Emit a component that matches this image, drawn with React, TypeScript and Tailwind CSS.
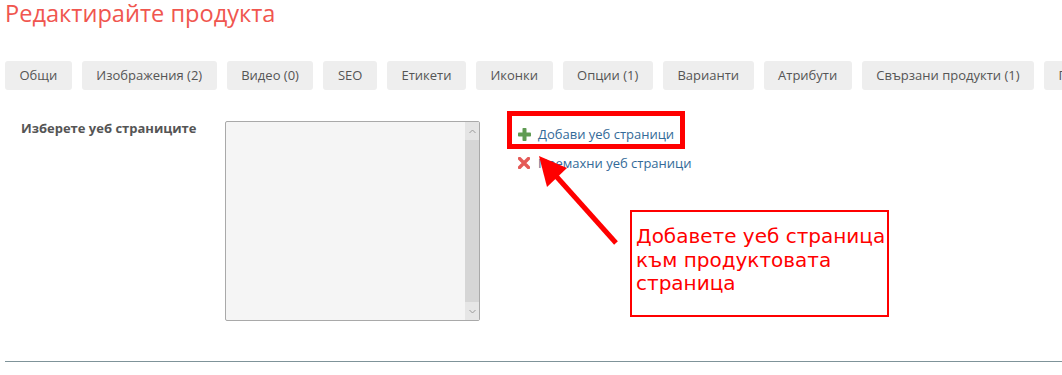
import React from 'react'

const tabs = [
  'Общи',
  'Изображения (2)',
  'Видео (0)',
  'SEO',
  'Етикети',
  'Иконки',
  'Опции (1)',
  'Варианти',
  'Атрибути',
  'Свързани продукти (1)',
  'Прикачени файлове',
]

function PlusIcon() {
  return (
    <svg width="13" height="13" viewBox="0 0 13 13" className="shrink-0">
      <rect x="4.5" y="0" width="4" height="13" rx="0.8" fill="#5f9b52" />
      <rect x="0" y="4.5" width="13" height="4" rx="0.8" fill="#5f9b52" />
    </svg>
  )
}

function TimesIcon() {
  return (
    <svg width="12" height="12" viewBox="0 0 12 12" className="shrink-0">
      <path d="M1.5 1.5 L10.5 10.5 M10.5 1.5 L1.5 10.5" stroke="#e45a57" strokeWidth="3.4" strokeLinecap="round" />
    </svg>
  )
}

function ListBox() {
  return (
    <div className="mt-[2px] flex h-[200px] w-[255px] rounded-[2px] border border-[#a9a9a9] bg-[#f5f5f5]">
      <div className="flex-1" />
      <div className="flex w-[14px] flex-col bg-[#d8d8d8]">
        <div className="flex h-[18px] items-center justify-center bg-[#e4e4e4]">
          <svg width="7" height="5" viewBox="0 0 7 5">
            <path d="M0.5 4 L3.5 1 L6.5 4" fill="none" stroke="#9a9a9a" strokeWidth="1" />
          </svg>
        </div>
        <div className="flex-1 bg-[#d6d6d6]" />
        <div className="flex h-[18px] items-center justify-center bg-[#e6e6e6]">
          <svg width="7" height="5" viewBox="0 0 7 5">
            <path d="M0.5 1 L3.5 4 L6.5 1" fill="none" stroke="#9a9a9a" strokeWidth="1" />
          </svg>
        </div>
      </div>
    </div>
  )
}

export default function App() {
  return (
    <div className="relative h-[375px] w-[1062px] overflow-hidden bg-white pl-[5px]" style={{ fontFamily: '"Open Sans", "Noto Sans", sans-serif' }}>
      <h1 className="text-[23.6px] font-normal leading-[26px] text-[#f0564f]">Редактирайте продукта</h1>

      <div className="mt-[35px] flex gap-[10px] overflow-hidden whitespace-nowrap">
        {tabs.map((t) => (
          <div key={t} className="shrink-0 rounded-[3px] bg-[#eeeeee] px-[14.5px] py-[5px] text-[13px] leading-[19px] text-[#555555]">
            {t}
          </div>
        ))}
      </div>

      <div className="mt-[29px] flex items-start">
        <div className="w-[220px] pl-4 text-[13px] font-bold leading-[18px] text-[#555555]">Изберете уеб страниците</div>
        <ListBox />
        <div className="ml-[38px] flex flex-col pt-[5px] text-[13px] leading-[20px] text-[#336a98]">
          <div className="flex items-center gap-[7px]">
            <PlusIcon />
            <span>Добави уеб страници</span>
          </div>
          <div className="mt-[9px] flex items-center gap-[8px]">
            <TimesIcon />
            <span>Премахни уеб страници</span>
          </div>
        </div>
      </div>

      <div className="mt-[40px] border-t border-[#7f9399]" />

      {/* annotation overlay */}
      <div className="pointer-events-none absolute left-[507px] top-[111px] h-[38px] w-[178px] border-[5px] border-[#ff0000]" />
      <svg className="pointer-events-none absolute left-0 top-0" width="1062" height="375">
        <line x1="616" y1="243" x2="556" y2="176" stroke="#ff0000" strokeWidth="5" />
        <polygon points="539,156 547,187 567,168" fill="#ff0000" />
      </svg>
      <div
        className="absolute left-[630px] top-[210px] h-[107px] w-[259px] border-2 border-[#ff0000] bg-white pl-[4px] pt-[13px] text-[20px] leading-[23.5px] text-[#ff0000]"
        style={{ fontFamily: '"DejaVu Sans", sans-serif' }}
      >
        Добавете уеб страница
        <br />
        към продуктовата
        <br />
        страница
      </div>
    </div>
  )
}
